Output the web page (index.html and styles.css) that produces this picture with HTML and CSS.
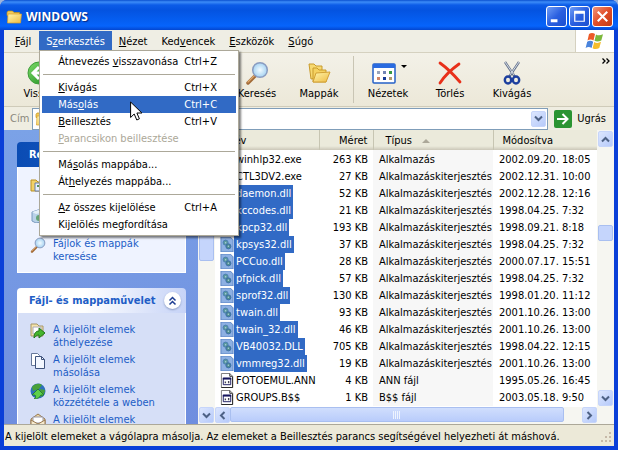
FILE: index.html
```
<!DOCTYPE html>
<html lang="hu">
<head>
	<meta charset="utf-8">
	<title>WINDOWS</title>
	<link rel="stylesheet" href="styles.css">
</head>
<body>
<svg class="defs" aria-hidden="true">
	<defs>
		<linearGradient id="gGreen" x1="0" y1="0" x2="1" y2="1"><stop offset="0" stop-color="#7fdc6c"/><stop offset="1" stop-color="#1c8a1c"/></linearGradient>
		<linearGradient id="gFolder" x1="0" y1="0" x2="1" y2="1"><stop offset="0" stop-color="#fff6ae"/><stop offset="1" stop-color="#eebb42"/></linearGradient>
		<radialGradient id="gLens"><stop offset="0" stop-color="#f2fbff"/><stop offset="1" stop-color="#a5d2f2"/></radialGradient>
		<symbol id="folder" viewBox="0 0 16 16">
			<path d="M1 3.500 2 2h4.500l1.500 1.500H13.500v3H1z" fill="#f3ca58" stroke="#c09018" stroke-width=".7"/>
			<path d="M2 5h13.500l-1 9H1.500z" fill="url(#gFolder)" stroke="#d7a12b" stroke-width=".7"/>
		</symbol>
		<symbol id="lens" viewBox="0 0 24 24">
			<path d="M10 15 3 22" stroke="#a36b38" stroke-width="3.500" stroke-linecap="round"/>
			<path d="M10 14 3 21" stroke="#dfa86d" stroke-width="1.200" stroke-linecap="round"/>
			<circle cx="15" cy="9" r="7.300" fill="url(#gLens)" stroke="#8a9cc0" stroke-width="1.500"/>
		</symbol>
		<symbol id="dll" viewBox="0 0 15 16">
			<path d="M1 0h10l3 3v13H1z" fill="#8db0e2" stroke="#5b83c4"/>
			<circle cx="6" cy="6" r="2.700" fill="#5b9a9c" stroke="#4a7db4"/>
			<circle cx="9" cy="10" r="2.700" fill="#4e8d90" stroke="#3a6caa"/>
			<circle cx="6" cy="6" r=".8" fill="#a9cbe6"/>
			<circle cx="9" cy="10" r=".8" fill="#a9cbe6"/>
		</symbol>
		<symbol id="doc" viewBox="0 0 15 16">
			<path d="M1.500.5h9l3 3v12h-12z" fill="#fff" stroke="#777"/>
			<path d="M10.500.5v3h3M13.500 4v11.500h-12" fill="none" stroke="#222"/>
			<path d="M3.500 5.500h8v7h-8z" fill="#fff" stroke="#14145c"/>
			<path d="M3 5h9v2H3z" fill="#14145c"/>
			<path d="M5 9h1.500v2H5zM8.500 8.500H10V11H8.500z" fill="#445"/>
		</symbol>
		<symbol id="up" viewBox="0 0 9 9"><path d="m1 6.500 3.500-3.500L8 6.500" fill="none" stroke="#4d6185" stroke-width="2"/></symbol>
		<symbol id="down" viewBox="0 0 9 9"><path d="m1 2.500 3.500 3.500L8 2.500" fill="none" stroke="#4d6185" stroke-width="2"/></symbol>
		<symbol id="left" viewBox="0 0 9 9"><path d="M6.500 1 3 4.500 6.500 8" fill="none" stroke="#4d6185" stroke-width="2"/></symbol>
		<symbol id="right" viewBox="0 0 9 9"><path d="M2.500 1 6 4.500 2.500 8" fill="none" stroke="#4d6185" stroke-width="2"/></symbol>
	</defs>
</svg>

<div class="window">
	<header class="titlebar">
		<svg class="i16" aria-hidden="true"><use href="#folder"/></svg>
		<h1>WINDOWS</h1>
		<button class="cap" aria-label="Kis méret"><svg viewBox="0 0 20 20"><path d="M4 13h7v3H4z" fill="#fff"/></svg></button>
		<button class="cap" aria-label="Teljes méret"><svg viewBox="0 0 20 20"><path d="M5 5.500h10v9.500H5z" fill="none" stroke="#fff" stroke-width="1.300"/><path d="M4.400 4h11.200v3H4.400z" fill="#fff"/></svg></button>
		<button class="cap close" aria-label="Bezárás"><svg viewBox="0 0 20 20"><path d="m5 5 10 10M15 5 5 15" stroke="#fff" stroke-width="2.200"/></svg></button>
	</header>

	<nav class="menubar">
		<button><u>F</u>ájl</button>
		<div class="menuwrap">
			<button class="open">S<u>z</u>erkesztés</button>
			<div class="menu">
				<button><span>Átnevezés <u>v</u>isszavonása</span><kbd>Ctrl+Z</kbd></button>
				<hr>
				<button><span><u>K</u>ivágás</span><kbd>Ctrl+X</kbd></button>
				<button class="hot"><span>Más<u>o</u>lás</span><kbd>Ctrl+C</kbd></button>
				<button><span><u>B</u>eillesztés</span><kbd>Ctrl+V</kbd></button>
				<button disabled><span><u>P</u>arancsikon beillesztése</span></button>
				<hr>
				<button><span>Má<u>s</u>olás mappába...</span></button>
				<button><span>Át<u>h</u>elyezés mappába...</span></button>
				<hr>
				<button><span><u>A</u>z összes kijelölése</span><kbd>Ctrl+A</kbd></button>
				<button><span>Kijelölés me<u>g</u>fordítása</span></button>
				<svg class="pointer" viewBox="0 0 13 20" aria-hidden="true"><path d="M.6 1v15.500l3.600-3.500 2.600 6 2.600-1.200L6.900 12h5z" fill="#fff" stroke="#000"/></svg>
			</div>
		</div>
		<button><u>N</u>ézet</button>
		<button>Ked<u>v</u>encek</button>
		<button><u>E</u>szközök</button>
		<button><u>S</u>úgó</button>
		<span class="flag">
			<svg viewBox="0 0 20 18" aria-hidden="true">
				<path d="M4 2c2-1.500 4-1.500 6 0L8.500 8.500c-2-1.300-4-1.300-6 0z" fill="#ec5a28"/>
				<path d="M11 2.400c2 1.200 4 1.200 7-.2l-1.700 6.300c-2.500 1.400-5 1.400-6.800.3z" fill="#7cb83c"/>
				<path d="M2.200 9.700c2-1.300 4-1.300 6 0L6.600 16c-2-1.300-4-1.300-6 0z" fill="#4a84dc"/>
				<path d="M9.200 10c2 1.200 4.300 1.200 6.800-.2L14.300 16c-2.300 1.400-4.700 1.400-6.700.2z" fill="#f5bd2c"/>
			</svg>
		</span>
	</nav>

	<div class="toolbar">
		<div class="history">
			<button><svg viewBox="0 0 24 24"><circle cx="12" cy="12" r="11" fill="url(#gGreen)" stroke="#3f9d3a"/><path d="m12 6-6 6 6 6M6.500 12H18" fill="none" stroke="#fff" stroke-width="3"/></svg>Vissza</button>
		</div>
		<button><svg aria-hidden="true"><use href="#lens"/></svg>Keresés</button>
		<button><svg viewBox="0 0 24 24"><path d="M2 3h5l2 2h6v11l-11 2z" fill="#f7d970" stroke="#c99b2c"/><path d="M6 7h4l2 2h7v12H6z" fill="#f5d261" stroke="#c99b2c"/><path d="m9 12 14-1-4 10H6z" fill="url(#gFolder)" stroke="#d2a136"/></svg>Mappák</button>
		<span class="bar"></span>
		<button class="views">
			<svg viewBox="0 0 24 24"><rect x="1" y="3" width="22" height="19" rx="1" fill="#fff" stroke="#2460c8" stroke-width="1.500"/><path d="M1 3h22v4H1z" fill="#2a6be0"/><path d="M5 10h3v3H5z" fill="#98a4bb"/><path d="M11 10h3v3h-3z" fill="#7385b6"/><path d="M17 10h3v3h-3z" fill="#379743"/><path d="M5 16h3v3H5z" fill="#d28567"/><path d="M11 16h3v3h-3z" fill="#173b96"/><path d="M17 16h3v3h-3z" fill="#b19a70"/></svg>
			Nézetek
			<i class="caret"></i>
		</button>
		<button><svg viewBox="0 0 24 24"><path d="M2 2c7 5 14 12 20 19M21 3C14 8 7 14 2 22" fill="none" stroke="#e8301a" stroke-width="2.800" stroke-linecap="round"/></svg>Törlés</button>
		<button><svg viewBox="0 0 24 24"><path d="m5 1 10 15M19 1 9 16" stroke="#66738c" stroke-width="2.400"/><path d="m5 1 9 13M19 1l-9 13" stroke="#d4dbe6"/><ellipse cx="8" cy="19" rx="3.200" ry="3.500" fill="none" stroke="#1d3f9e" stroke-width="2.400"/><ellipse cx="16" cy="19" rx="3.200" ry="3.500" fill="none" stroke="#1d3f9e" stroke-width="2.400"/></svg>Kivágás</button>
		<span class="more"><svg viewBox="0 0 8 6"><path d="m.5.500 2.500 2.500L.5 5.500M4.500.500 7 3 4.500 5.500" fill="none" stroke="#000" stroke-width="1.300"/></svg></span>
	</div>

	<div class="address">
		<label for="path">Cím</label>
		<div class="combo">
			<svg class="i16" aria-hidden="true"><use href="#folder"/></svg>
			<select id="path"></select>
			<span class="sbtn"><svg><use href="#down"/></svg></span>
		</div>
		<button class="go"><svg viewBox="0 0 18 18"><rect width="18" height="18" rx="2" fill="#2b9433"/><path d="M3 9h10M8.500 4l5 5-5 5" fill="none" stroke="#fff" stroke-width="2"/></svg>Ugrás</button>
	</div>

	<main class="content">
		<aside class="side">
			<section class="panel">
				<h2 class="dark">Rendszer</h2>
				<ul>
					<li><svg viewBox="0 0 16 16"><path d="M1 3h5l2 2h7v9H1z" fill="#f2d268" stroke="#b98f22"/><path d="M5 6h10v8H5z" fill="#e9f1ff" stroke="#657aa5"/><path d="M7 8h3v2H7zM11 8h3v2h-3z" fill="#58935d"/></svg></li>
					<li><svg viewBox="0 0 16 16"><path d="m2 5 9-3 4 3v9l-9 2-4-2z" fill="#b9d2e8" stroke="#7898bd"/><path d="m2 5 9-3 4 3-9 2z" fill="#e5f0f8"/><circle cx="9" cy="11" r="3" fill="#67a476"/></svg></li>
					<li><svg aria-hidden="true"><use href="#lens"/></svg><a href="#">Fájlok és mappák keresése</a></li>
				</ul>
			</section>
			<section class="panel tasks">
				<h2>Fájl- és mappaművelet
					<button class="fold" aria-label="Összecsukás"><svg viewBox="0 0 9 10"><path d="m1.500 4.500 3-3 3 3M1.500 8.500l3-3 3 3" fill="none" stroke="#1d3d92" stroke-width="1.500"/></svg></button>
				</h2>
				<ul>
					<li><svg viewBox="0 0 16 16"><path d="M1 1h6l2 2h4v10H1z" fill="#f5e4ab" stroke="#a69568"/><path d="M3 4h8v7H3z" fill="#fff" stroke="#aab"/><path d="M4 15c0-5 2-7 5-7V5l6 5-6 5v-3c-2 0-3 1-5 3z" fill="#45b52e" stroke="#21741c"/></svg><a href="#">A kijelölt elemek áthelyezése</a></li>
					<li><svg viewBox="0 0 16 16"><path d="M1.500.5h6l2 2v10h-8z" fill="#fff" stroke="#66789a"/><path d="M5.500 3.500h6l3 3v9h-9z" fill="#f3f7ff" stroke="#40547d"/><path d="M11.500 3.500v3h3" fill="none" stroke="#40547d"/></svg><a href="#">A kijelölt elemek másolása</a></li>
					<li><svg viewBox="0 0 16 16"><circle cx="8" cy="8" r="7.500" fill="#2f70bc"/><path d="M2 4c3-4 8-4 10-2L9 6 3 8zM10 6l5 1c0 3-2 6-4 7z" fill="#48a03a"/><path d="m8 6 6 6h-3c-1 2-3 4-7 4 2-1 2-3 1-4H2z" fill="#5dd04a" stroke="#1b6e20" stroke-width=".7"/></svg><a href="#">A kijelölt elemek közzététele a weben</a></li>
					<li><svg viewBox="0 0 16 16"><path d="m1 6 7-5 7 5v9H1z" fill="#ecd5a5" stroke="#98794e"/><path d="M3 4h10v6H3z" fill="#fff" stroke="#99a"/><path d="m1 7 7 4 7-4v8H1z" fill="#f5e9cd" stroke="#98794e"/></svg><a href="#">A kijelölt elemek</a></li>
				</ul>
			</section>
		</aside>
		<div class="vscroll sidescroll">
			<button class="sbtn" aria-label="Fel"><svg><use href="#up"/></svg></button>
			<div class="track"><i class="thumb"></i></div>
			<button class="sbtn" aria-label="Le"><svg><use href="#down"/></svg></button>
		</div>

		<div class="files">
			<div class="rows">
				<table>
					<colgroup><col class="c-name"><col class="c-size"><col class="c-type"><col></colgroup>
					<thead>
						<tr><th>Név</th><th class="num">Méret</th><th>Típus <i class="sort"></i></th><th>Módosítva</th></tr>
					</thead>
					<tbody>
						<tr><td><svg><use href="#doc"/></svg><span>winhlp32.exe</span></td><td class="num">263 KB</td><td>Alkalmazás</td><td>2002.09.20. 18:05</td></tr>
						<tr><td><svg><use href="#doc"/></svg><span>CTL3DV2.exe</span></td><td class="num">27 KB</td><td>Alkalmazáskiterjesztés</td><td>2002.12.31. 10:00</td></tr>
						<tr class="sel"><td><svg><use href="#dll"/></svg><span>daemon.dll</span></td><td class="num">52 KB</td><td>Alkalmazáskiterjesztés</td><td>2002.12.28. 12:16</td></tr>
						<tr class="sel"><td><svg><use href="#dll"/></svg><span>kccodes.dll</span></td><td class="num">21 KB</td><td>Alkalmazáskiterjesztés</td><td>1998.04.25. 7:32</td></tr>
						<tr class="sel"><td><svg><use href="#dll"/></svg><span>kpcp32.dll</span></td><td class="num">193 KB</td><td>Alkalmazáskiterjesztés</td><td>1998.09.21. 8:18</td></tr>
						<tr class="sel"><td><svg><use href="#dll"/></svg><span>kpsys32.dll</span></td><td class="num">37 KB</td><td>Alkalmazáskiterjesztés</td><td>1998.04.25. 7:32</td></tr>
						<tr class="sel"><td><svg><use href="#dll"/></svg><span>PCCuo.dll</span></td><td class="num">28 KB</td><td>Alkalmazáskiterjesztés</td><td>2000.07.17. 15:51</td></tr>
						<tr class="sel"><td><svg><use href="#dll"/></svg><span>pfpick.dll</span></td><td class="num">57 KB</td><td>Alkalmazáskiterjesztés</td><td>1998.04.25. 7:32</td></tr>
						<tr class="sel"><td><svg><use href="#dll"/></svg><span>sprof32.dll</span></td><td class="num">130 KB</td><td>Alkalmazáskiterjesztés</td><td>1998.01.20. 11:12</td></tr>
						<tr class="sel"><td><svg><use href="#dll"/></svg><span>twain.dll</span></td><td class="num">93 KB</td><td>Alkalmazáskiterjesztés</td><td>2001.10.26. 13:00</td></tr>
						<tr class="sel"><td><svg><use href="#dll"/></svg><span>twain_32.dll</span></td><td class="num">46 KB</td><td>Alkalmazáskiterjesztés</td><td>2001.10.26. 13:00</td></tr>
						<tr class="sel"><td><svg><use href="#dll"/></svg><span>VB40032.DLL</span></td><td class="num">705 KB</td><td>Alkalmazáskiterjesztés</td><td>1998.04.22. 12:15</td></tr>
						<tr class="sel"><td><svg><use href="#dll"/></svg><span>vmmreg32.dll</span></td><td class="num">19 KB</td><td>Alkalmazáskiterjesztés</td><td>2001.10.26. 13:00</td></tr>
						<tr><td><svg><use href="#doc"/></svg><span>FOTOEMUL.ANN</span></td><td class="num">4 KB</td><td>ANN fájl</td><td>1995.05.26. 16:45</td></tr>
						<tr><td><svg><use href="#doc"/></svg><span>GROUPS.B$$</span></td><td class="num">1 KB</td><td>B$$ fájl</td><td>2003.05.18. 9:50</td></tr>
					</tbody>
				</table>
			</div>
			<div class="hscroll">
				<button class="sbtn" aria-label="Balra"><svg><use href="#left"/></svg></button>
				<div class="track"><i class="thumb"><svg viewBox="0 0 8 8"><path d="M.5 0v8M2.500 0v8M4.500 0v8M6.500 0v8" stroke="#eef4fe"/></svg></i></div>
				<button class="sbtn" aria-label="Jobbra"><svg><use href="#right"/></svg></button>
			</div>
		</div>
		<div class="vscroll filescroll">
			<button class="sbtn" aria-label="Fel"><svg><use href="#up"/></svg></button>
			<div class="track"><i class="thumb"></i></div>
			<button class="sbtn" aria-label="Le"><svg><use href="#down"/></svg></button>
		</div>
	</main>

	<footer class="status">
		<span>A kijelölt elemeket a vágólapra másolja. Az elemeket a Beillesztés parancs segítségével helyezheti át máshová.</span>
		<svg viewBox="0 0 12 12" aria-hidden="true"><path d="M9 1h2v2H9zM5 5h2v2H5zM9 5h2v2H9zM1 9h2v2H1zM5 9h2v2H5zM9 9h2v2H9z" fill="#c6b9a8"/></svg>
	</footer>
</div>
</body>
</html>
```
FILE: styles.css
```
* { box-sizing: border-box; }

body {
	margin: 0;
	background: #9db4dc;
	font: 11px/13px "DejaVu Sans Condensed", "DejaVu Sans", sans-serif;
	color: #000;
}

button, select {
	font: inherit;
	color: inherit;
	background: none;
	border: 0;
	padding: 0;
	margin: 0;
}

svg { flex: none; display: block; }
.defs { position: absolute; width: 0; height: 0; }
.i16 { width: 16px; height: 16px; }

.window {
	height: 100vh;
	display: flex;
	flex-direction: column;
	padding: 0 4px 4px;
	background: #0a3fd8;
	border-radius: 7px 7px 0 0;
	overflow: hidden;
}

/* title bar */
.titlebar {
	flex: none;
	height: 30px;
	margin: 0 -4px;
	padding: 3px 5px 0 6px;
	display: flex;
	align-items: center;
	gap: 2px;
	background: linear-gradient(#0a50d0 0, #3c8cf8 2px, #0c5ce8 5px, #0453e0 10px, #0560f4 22px, #0664fc 26px, #0346d0 30px);
}
.titlebar h1 {
	flex: 1;
	margin: 0 0 0 2px;
	font: bold 12px/16px "Open Sans", sans-serif;
	color: #fff;
	text-shadow: 1px 1px 1px #0a2a80;
}
.cap {
	width: 21px;
	height: 21px;
	border: 1px solid #fff;
	border-radius: 3px;
	background: linear-gradient(135deg, #6f9df6, #2a5fe0 50%, #1b4fd0);
}
.cap svg { width: 19px; height: 19px; }
.cap.close { background: linear-gradient(135deg, #f0957a, #e04d28 50%, #c03c16); }

/* menu bar */
.menubar {
	flex: none;
	height: 23px;
	display: flex;
	padding-left: 3px;
	background: #efeee4;
	border-bottom: 1px solid #d5d1c0;
}
.menubar > button, .menuwrap > button {
	height: 21px;
	padding: 0 7px;
	margin-top: 1px;
}
.menubar > button:first-child { padding: 0 8px; }
.menuwrap { position: relative; }
.menuwrap > .open { background: #316ac5; color: #fff; }
.flag {
	width: 39px;
	margin-left: auto;
	background: #fff;
	border-left: 1px solid #d5d1c0;
	display: flex;
	align-items: center;
	justify-content: center;
}
.flag svg { width: 20px; height: 18px; }

.menu {
	position: absolute;
	z-index: 5;
	top: 20px;
	left: 0;
	width: 200px;
	padding: 2px;
	background: #fff;
	border: 1px solid #aca899;
	box-shadow: 2px 2px 2px rgba(0, 0, 0, .5);
}
.menu button {
	display: flex;
	width: 100%;
	height: 17px;
	align-items: center;
	padding: 0 0 0 16px;
	text-align: left;
	white-space: nowrap;
}
.menu span { flex: 1; }
.menu kbd { font: inherit; width: 52px; }
.menu .hot { background: #316ac5; color: #fff; }
.menu button:disabled { color: #aca899; }
.menu hr {
	height: 1px;
	margin: 4px 1px;
	border: 0;
	background: #aca899;
}
.pointer {
	position: absolute;
	left: 90px;
	top: 50px;
	width: 13px;
	height: 20px;
}

/* toolbar */
.toolbar {
	flex: none;
	height: 54px;
	display: flex;
	padding-left: 4px;
	background: linear-gradient(#f3f1e8, #ece8d8);
	border-bottom: 1px solid #cfcbb9;
}
.history { width: 218px; }
.toolbar button {
	position: relative;
	width: 62px;
	height: 52px;
	display: flex;
	flex-direction: column;
	align-items: center;
	gap: 2px;
	padding-top: 8px;
}
.toolbar button svg { width: 24px; height: 24px; }
.bar {
	width: 1px;
	margin: 3px;
	background: #c9c5b4;
}
.toolbar .views svg { margin-right: 8px; }
.caret {
	position: absolute;
	right: 12px;
	top: 12px;
	border: 3px solid transparent;
	border-top-color: #000;
	border-bottom: 0;
}
.more { margin: 5px 4px 0 auto; }
.more svg { width: 8px; height: 6px; }

/* address bar */
.address {
	flex: none;
	height: 23px;
	display: flex;
	align-items: center;
	padding: 0 8px 0 6px;
	background: #efede1;
}
.address label { width: 22px; color: #8a887c; }
.combo {
	flex: 1;
	height: 22px;
	display: flex;
	align-items: center;
	padding: 1px 1px 1px 2px;
	background: #fff;
	border: 1px solid #7f9db9;
}
.combo select { flex: 1; appearance: none; padding-left: 3px; }
.go {
	display: flex;
	align-items: center;
	gap: 5px;
	margin-left: 6px;
}
.go svg { width: 18px; height: 18px; }

/* content area */
.content {
	flex: 1;
	min-height: 0;
	display: flex;
	background: #fff;
}
.side {
	width: 194px;
	overflow: hidden;
	padding: 12px 12px 0 13px;
	background: linear-gradient(#7ba2e7, #6f8edf);
}
.panel { margin-bottom: 15px; }
.panel h2 {
	height: 25px;
	margin: 0;
	padding: 0 5px 0 12px;
	display: flex;
	align-items: center;
	justify-content: space-between;
	border-radius: 4px 4px 0 0;
	font-size: 11px;
	white-space: nowrap;
	color: #215dc6;
	background: linear-gradient(90deg, #fff 40%, #c6d3f7);
}
.panel h2.dark { color: #fff; background: linear-gradient(90deg, #0a4cb4, #2a62cc); }
.panel ul {
	margin: 0;
	padding: 10px 12px 9px;
	list-style: none;
	display: flex;
	flex-direction: column;
	gap: 4px;
	background: #eff3ff;
	border: 1px solid #fff;
	border-top: 0;
}
.tasks ul { background: #d6dff7; }
.panel li { display: flex; gap: 7px; min-height: 26px; }
.panel li svg { width: 16px; height: 16px; }
.panel a { color: #215dc6; text-decoration: none; }
.fold {
	width: 17px;
	height: 17px;
	display: flex;
	align-items: center;
	justify-content: center;
	border-radius: 50%;
	background: #fff;
	box-shadow: 0 1px 2px #8b9cc4;
}
.fold svg { width: 9px; height: 10px; }

/* scroll bars */
.sbtn {
	flex: none;
	width: 15px;
	height: 16px;
	display: flex;
	align-items: center;
	justify-content: center;
	background: linear-gradient(135deg, #dce6fe, #b6cafa);
	border: 1px solid #c6d5fa;
	border-radius: 2px;
}
.sbtn svg { width: 9px; height: 9px; }
.vscroll {
	width: 17px;
	display: flex;
	flex-direction: column;
	padding: 1px;
	background: #f6f6f1;
}
.track { flex: 1; min-height: 0; }
.thumb {
	display: flex;
	align-items: center;
	justify-content: center;
	background: #c5d5fc;
	border: 1px solid #a9bff0;
	border-radius: 2px;
}
.sidescroll .thumb { height: 44%; }
.filescroll { padding-bottom: 18px; }
.filescroll .track { padding-top: 78px; }
.filescroll .thumb { height: 16px; }
.hscroll {
	flex: none;
	height: 17px;
	display: flex;
	background: #f6f6f1;
}
.hscroll .thumb {
	width: 95%;
	height: 15px;
	background: linear-gradient(#d0defd, #b9ccfb);
}
.hscroll .thumb svg { width: 8px; height: 8px; }

/* file list */
.files {
	flex: 1;
	min-width: 0;
	display: flex;
	flex-direction: column;
}
.rows { flex: 1; min-height: 0; overflow: hidden; }
.files table {
	width: 100%;
	table-layout: fixed;
	border-collapse: collapse;
}
.c-name { width: 104px; }
.c-size { width: 54px; }
.c-type { width: 120px; }
.files th {
	height: 20px;
	padding: 0 5px 0 12px;
	text-align: left;
	font-weight: normal;
	background: linear-gradient(#ebeadb 16px, #cbc7b8);
	border-right: 1px solid #c7c5b2;
}
.files th:last-child { border-right: 0; padding-left: 9px; }
.files td {
	height: 17px;
	padding: 0 0 0 6px;
	white-space: nowrap;
}
.files tbody tr:first-child td { height: 18px; padding-top: 1px; }
.files .num { text-align: right; padding: 0 5px 0 0; }
.files td:nth-child(3) { background: #f7f7f7; }
.files td:first-child { padding-left: 5px; }
.files td svg {
	display: inline-block;
	width: 14px;
	height: 15px;
	vertical-align: middle;
}
.files td span {
	display: inline-block;
	padding: 2px;
	vertical-align: middle;
}
.sel span { background: #316ac5; color: #fff; }
.sort {
	display: inline-block;
	margin-left: 7px;
	border: 4px solid transparent;
	border-bottom-color: #aca899;
	border-top: 0;
	vertical-align: middle;
}

/* status bar */
.status {
	flex: none;
	height: 22px;
	display: flex;
	align-items: center;
	justify-content: space-between;
	padding: 2px 2px 0 1px;
	white-space: nowrap;
	background: #ece9d8;
	border-top: 1px solid #aca899;
}
.status svg { width: 12px; height: 12px; }
```
